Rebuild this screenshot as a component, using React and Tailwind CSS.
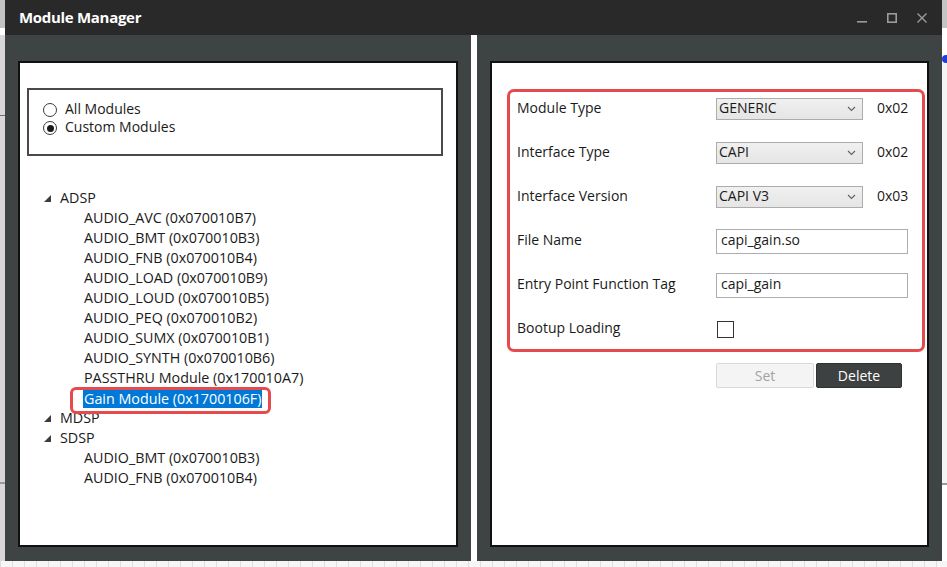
import React from "react";

function Chevron() {
  return (
    <svg width="9" height="6" viewBox="0 0 9 6" className="shrink-0">
      <path d="M1 1 L4.5 4.5 L8 1" fill="none" stroke="#606060" strokeWidth="1.1" />
    </svg>
  );
}

function Select({ value }) {
  return (
    <div className="w-[147px] h-[22px] shrink-0 flex items-center justify-between pl-[2px] pr-[6px] border border-[#acacac] bg-[linear-gradient(#f0f0f0,#e5e5e5)] text-[14px] text-[#1a1a1a]">
      <span className="pb-[3px]">{value}</span>
      <Chevron />
    </div>
  );
}

function TextInput({ value }) {
  return (
    <div className="w-[192px] h-[25px] shrink-0 flex items-center pl-[4px] pb-[3px] border border-[#abadb3] bg-white text-[14px] text-[#1a1a1a]">
      {value}
    </div>
  );
}

function Row({ label, children }) {
  return (
    <div className="h-[22px] flex items-center">
      <div className="w-[199px] shrink-0 pb-[3px] text-[14px] text-[#1a1a1a]">{label}</div>
      {children}
    </div>
  );
}

function Tri() {
  return (
    <svg width="7" height="7" viewBox="0 0 7 7" className="shrink-0">
      <polygon points="7,0 7,7 0,7" fill="#3c3c3c" />
    </svg>
  );
}

function Radio({ checked, label }) {
  return (
    <div className="h-[18px] flex items-center">
      <div className="w-[14px] h-[14px] rounded-full border border-[#3a3a3a] bg-white flex items-center justify-center shrink-0">
        {checked && <div className="w-[7px] h-[7px] rounded-full bg-[#1a1a1a]" />}
      </div>
      <span className="ml-[8px] pb-[3px] text-[14px] text-[#1a1a1a]">{label}</span>
    </div>
  );
}

const adsp = [
  "AUDIO_AVC (0x070010B7)",
  "AUDIO_BMT (0x070010B3)",
  "AUDIO_FNB (0x070010B4)",
  "AUDIO_LOAD (0x070010B9)",
  "AUDIO_LOUD (0x070010B5)",
  "AUDIO_PEQ (0x070010B2)",
  "AUDIO_SUMX (0x070010B1)",
  "AUDIO_SYNTH (0x070010B6)",
  "PASSTHRU Module (0x170010A7)",
];

const sdsp = ["AUDIO_BMT (0x070010B3)", "AUDIO_FNB (0x070010B4)"];

function Parent({ label }) {
  return (
    <div className="h-[20px] flex items-center pl-[17px]">
      <Tri />
      <span className="ml-[9px] text-[14.3px] text-[#1a1a1a]">{label}</span>
    </div>
  );
}

function Child({ label }) {
  return (
    <div className="h-[20px] flex items-center pl-[57px] text-[14.3px] text-[#1a1a1a]">
      {label}
    </div>
  );
}

function Tree() {
  return (
    <div className="mt-[32px]">
      <Parent label="ADSP" />
      {adsp.map((a) => (
        <Child key={a} label={a} />
      ))}
      <div className="h-[20px] flex items-center pl-[56px]">
        <span className="relative leading-[19px] px-[1px] bg-[#0078d7] text-white text-[14.3px]">
          Gain Module (0x1700106F)
          <span className="absolute left-[-13px] right-[-9px] top-[-2px] bottom-[-6px] rounded-[6px] border-[3px] border-[#e64a4d]" />
        </span>
      </div>
      <Parent label="MDSP" />
      <Parent label="SDSP" />
      {sdsp.map((a) => (
        <Child key={a + "s"} label={a} />
      ))}
    </div>
  );
}

export default function App() {
  return (
    <div className="relative w-[947px] h-[567px] overflow-hidden bg-[#f4f4f4] font-['Open_Sans',sans-serif]">
      {/* background app: bottom grid */}
      <div className="absolute left-0 top-[561px] w-[947px] h-[6px] bg-[repeating-linear-gradient(90deg,#dedede_0_1px,#f6f6f6_1px_12px)]" />
      {/* background app: left strip */}
      <div className="absolute left-0 top-0 w-[5px] h-[561px] flex flex-col bg-[#d8d8d8]">
        <div className="h-[28px] bg-[#c2c2c2]" />
        <div className="h-[7px] bg-white" />
        <div className="h-[80px]" />
        <div className="h-[1px] bg-[#6e6e6e]" />
        <div className="h-[366px]" />
        <div className="h-[2px] bg-[#9a9a9a]" />
      </div>
      {/* background app: right strip */}
      <div className="absolute left-[942px] top-0 w-[5px] h-[561px] flex flex-col bg-white">
        <div className="h-[28px] bg-[#c4c4c4]" />
        <div className="h-[27px]" />
        <div className="w-[8px] h-[8px] rounded-full bg-[#1f3fd6]" />
        <div className="h-[420px] bg-[#f4f4f4]" />
        <div className="h-[2px] bg-[#9a9a9a]" />
      </div>

      {/* Window */}
      <div className="absolute left-[5px] top-0 w-[937px] h-[561px] flex flex-col bg-[#3e4343]">
        {/* Title bar */}
        <div className="h-[35px] shrink-0 flex items-center justify-between bg-[#292929] pl-[14px] pr-[15px]">
          <span className="text-white font-bold text-[15px] tracking-[-0.3px]">Module Manager</span>
          <div className="flex items-center gap-[20px]">
            <svg width="10" height="10" viewBox="0 0 10 10">
              <rect x="0" y="8" width="10" height="1.6" fill="#9b9b9b" />
            </svg>
            <svg width="10" height="10" viewBox="0 0 10 10">
              <rect x="0.8" y="0.8" width="8.4" height="8.4" fill="none" stroke="#9b9b9b" strokeWidth="1.6" />
            </svg>
            <svg width="10" height="10" viewBox="0 0 10 10">
              <path d="M0.5 0.5 L9.5 9.5 M9.5 0.5 L0.5 9.5" stroke="#9b9b9b" strokeWidth="1.4" />
            </svg>
          </div>
        </div>

        {/* Body */}
        <div className="flex-1 flex">
          {/* Left column */}
          <div className="w-[466px] shrink-0 pl-[13px] pr-[13px] pt-[26px] pb-[14px]">
            <div className="h-full border-2 border-[#111] bg-white pl-[7px] pr-[13px] pt-[25px]">
              <div className="h-[68px] border-2 border-[#4a4a4a] pl-[14px] pt-[11px]">
                <Radio label="All Modules" />
                <Radio checked label="Custom Modules" />
              </div>
              <Tree />
            </div>
          </div>

          {/* Divider */}
          <div className="w-[6px] shrink-0 bg-white" />

          {/* Right column */}
          <div className="flex-1 pl-[13px] pr-[13px] pt-[26px] pb-[14px]">
            <div className="h-full border-2 border-[#111] bg-white pl-[15px] pt-[26px]">
              <div className="w-[418px] h-[263px] border-[3px] border-[#e64a4d] rounded-[7px] pl-[7px] pt-[6px] flex flex-col gap-[22px]">
                <Row label="Module Type">
                  <Select value="GENERIC" />
                  <span className="ml-[14px] pb-[3px] text-[14px] text-[#1a1a1a]">0x02</span>
                </Row>
                <Row label="Interface Type">
                  <Select value="CAPI" />
                  <span className="ml-[14px] pb-[3px] text-[14px] text-[#1a1a1a]">0x02</span>
                </Row>
                <Row label="Interface Version">
                  <Select value="CAPI V3" />
                  <span className="ml-[14px] pb-[3px] text-[14px] text-[#1a1a1a]">0x03</span>
                </Row>
                <Row label="File Name">
                  <TextInput value="capi_gain.so" />
                </Row>
                <Row label="Entry Point Function Tag">
                  <TextInput value="capi_gain" />
                </Row>
                <Row label="Bootup Loading">
                  <div className="ml-[1px] w-[17px] h-[17px] border border-[#333] bg-white" />
                </Row>
              </div>
              <div className="mt-[11px] ml-[209px] flex gap-[2px]">
                <div className="w-[98px] h-[25px] flex items-center justify-center border border-[#d9d9d9] rounded-[2px] bg-[#f4f4f4] text-[14px] text-[#a3a3a3]">
                  Set
                </div>
                <div className="w-[86px] h-[25px] flex items-center justify-center border border-[#2e3232] rounded-[2px] bg-[#3d4141] text-[14px] text-white">
                  Delete
                </div>
              </div>
            </div>
          </div>
        </div>
      </div>
    </div>
  );
}
